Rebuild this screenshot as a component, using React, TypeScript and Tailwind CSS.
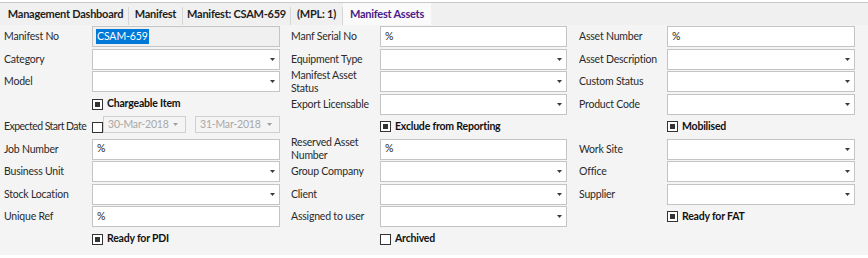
import React from 'react';

type Cell =
  | { kind: 'text'; label: React.ReactNode; value?: string; selected?: boolean }
  | { kind: 'select'; label: React.ReactNode }
  | { kind: 'check'; text: string; checked: boolean }
  | { kind: 'dates'; label: string }
  | { kind: 'empty' };

const font = { fontFamily: 'Lato, "Open Sans", sans-serif' };

// three columns of the form, ten rows each
const columns: Cell[][] = [
  [
    { kind: 'text', label: 'Manifest No', value: 'CSAM-659', selected: true },
    { kind: 'select', label: 'Category' },
    { kind: 'select', label: 'Model' },
    { kind: 'check', text: 'Chargeable Item', checked: true },
    { kind: 'dates', label: 'Expected Start Date' },
    { kind: 'text', label: 'Job Number', value: '%' },
    { kind: 'select', label: 'Business Unit' },
    { kind: 'select', label: 'Stock Location' },
    { kind: 'text', label: 'Unique Ref', value: '%' },
    { kind: 'check', text: 'Ready for PDI', checked: true },
  ],
  [
    { kind: 'text', label: 'Manf Serial No', value: '%' },
    { kind: 'select', label: 'Equipment Type' },
    { kind: 'select', label: <>Manifest Asset<br />Status</> },
    { kind: 'select', label: 'Export Licensable' },
    { kind: 'check', text: 'Exclude from Reporting', checked: true },
    { kind: 'text', label: <>Reserved Asset<br />Number</>, value: '%' },
    { kind: 'select', label: 'Group Company' },
    { kind: 'select', label: 'Client' },
    { kind: 'select', label: 'Assigned to user' },
    { kind: 'check', text: 'Archived', checked: false },
  ],
  [
    { kind: 'text', label: 'Asset Number', value: '%' },
    { kind: 'select', label: 'Asset Description' },
    { kind: 'select', label: 'Custom Status' },
    { kind: 'select', label: 'Product Code' },
    { kind: 'check', text: 'Mobilised', checked: true },
    { kind: 'select', label: 'Work Site' },
    { kind: 'select', label: 'Office' },
    { kind: 'select', label: 'Supplier' },
    { kind: 'check', text: 'Ready for FAT', checked: true },
    { kind: 'empty' },
  ],
];

const tabs = [
  { name: 'Management Dashboard', w: 'w-[125px]' },
  { name: 'Manifest', w: 'w-[53px]' },
  { name: 'Manifest: CSAM-659', w: 'w-[107px]' },
  { name: '(MPL: 1)', w: 'w-[51px]' },
];

function Arrow({ muted }: { muted?: boolean }) {
  return (
    <svg width="5" height="3" viewBox="0 0 5 3" className="shrink-0">
      <path d="M0 0h5L2.5 3z" fill={muted ? '#a0a0a0' : '#3a3a3a'} />
    </svg>
  );
}

function CheckBox({ checked }: { checked: boolean }) {
  return (
    <span className="w-[11px] h-[11px] border border-[#333] bg-white flex items-center justify-center shrink-0">
      {checked && <span className="w-[5px] h-[5px] bg-[#333]" />}
    </span>
  );
}

function Label({ children, pad, tight }: { children: React.ReactNode; pad: string; tight?: boolean }) {
  return (
    <div
      className={`h-[21px] flex items-center text-[10.5px] leading-[13px] text-[#2a2a2a] whitespace-nowrap ${pad} ${
        tight ? 'tracking-[-0.55px]' : 'tracking-[-0.2px]'
      }`}
    >
      <span>{children}</span>
    </div>
  );
}

function Control({ cell }: { cell: Cell }) {
  if (cell.kind === 'text') {
    return (
      <div
        className={`h-[21px] border border-[#c4c4c4] flex items-center px-[3px] text-[10.5px] text-[#222] ${
          cell.selected ? 'bg-[#f0f0f0]' : 'bg-white'
        }`}
      >
        {cell.selected ? (
          <span className="bg-[#0078d7] text-white px-px leading-[15px] tracking-[-0.1px]">{cell.value}</span>
        ) : (
          <span className="pl-px">{cell.value}</span>
        )}
      </div>
    );
  }
  if (cell.kind === 'select') {
    return (
      <div className="h-[21px] border border-[#c4c4c4] bg-white flex items-center justify-end pr-[4px]">
        <Arrow />
      </div>
    );
  }
  if (cell.kind === 'check') {
    return (
      <div className="h-[21px] flex items-center gap-[4px] text-[10.5px] tracking-[-0.2px] font-bold text-[#111] whitespace-nowrap">
        <CheckBox checked={cell.checked} />
        <span>{cell.text}</span>
      </div>
    );
  }
  if (cell.kind === 'dates') {
    return (
      <div className="h-[21px] flex items-start">
        <span className="mt-[6px]">
          <CheckBox checked={false} />
        </span>
        {['30-Mar-2018', '31-Mar-2018'].map((d, i) => (
          <div
            key={d}
            className={`h-[17px] border border-[#cfcfcf] flex items-center justify-between pl-[4px] pr-[7px] text-[10.5px] tracking-[-0.2px] text-[#a8a8a8] whitespace-nowrap ${
              i === 0 ? 'w-[83px]' : 'w-[85px] ml-[9px]'
            }`}
          >
            <span>{d}</span>
            <Arrow muted />
          </div>
        ))}
      </div>
    );
  }
  return <div />;
}

export default function App() {
  const pads = ['pl-0', 'pl-[11px]', 'pl-[12px]'];
  const rows = Array.from({ length: 10 }, (_, i) => i);

  return (
    <div className="w-[868px] h-[258px] bg-white pt-[2px]" style={font}>
      {/* tab strip */}
      <div className="h-[23px] border-t border-[#c8c8c8] bg-[#f0f0f0] flex items-stretch pl-[3px]">
        {tabs.map((t) => (
          <React.Fragment key={t.name}>
            <div
              className={`${t.w} flex items-center justify-center text-[11px] tracking-[-0.25px] font-bold text-[#1e1e1e] whitespace-nowrap`}
            >
              {t.name}
            </div>
            <span className="w-px h-[18px] self-end bg-[#d6d6d6]" />
          </React.Fragment>
        ))}
        <div className="w-[88px] bg-[#fafafa] flex items-center justify-center text-[11px] tracking-[-0.25px] font-bold text-[#4a1a8a] whitespace-nowrap">
          Manifest Assets
        </div>
      </div>

      {/* form body */}
      <div className="bg-[#f4f4f4] pt-[1px] pb-[4px] pl-[4px]">
        <div className="grid grid-cols-[88px_188px_100px_187px_100px_188px] auto-rows-[22.5px]">
          {rows.map((r) =>
            columns.map((col, c) => {
              const cell = col[r];
              const label =
                cell.kind === 'text' || cell.kind === 'select' || cell.kind === 'dates' ? cell.label : null;
              return (
                <React.Fragment key={`${r}-${c}`}>
                  <Label pad={pads[c]} tight={cell.kind === 'dates'}>
                    {label}
                  </Label>
                  <Control cell={cell} />
                </React.Fragment>
              );
            })
          )}
        </div>
      </div>
    </div>
  );
}
